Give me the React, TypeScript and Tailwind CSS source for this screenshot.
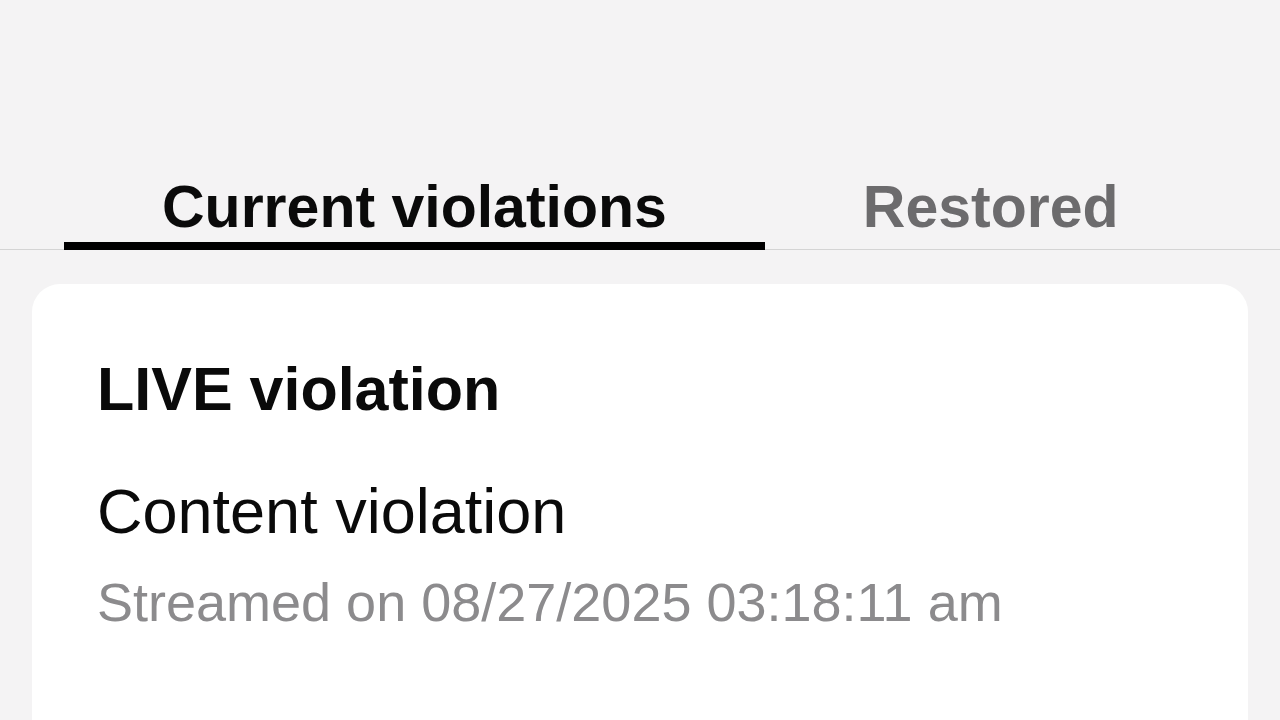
import React, { useState } from "react";

const tabs = ["Current violations", "Restored"];

export default function App() {
  const [active, setActive] = useState(0);

  return (
    <div
      className="w-full h-[720px] overflow-hidden bg-[#f4f3f4]"
      style={{ fontFamily: '"Liberation Sans", Arial, sans-serif' }}
    >
      {/* tab bar */}
      <div className="h-[250px] border-b border-[#d4d4d4] flex items-end pl-[64px]">
        {tabs.map((t, i) => (
          <button
            key={t}
            onClick={() => setActive(i)}
            className="flex flex-col items-stretch -mb-px"
          >
            <span
              className={
                "block px-[98px] text-[59px] leading-[60px] font-bold whitespace-nowrap " +
                (active === i ? "text-[#0a0a0a]" : "text-[#6c6b6d]")
              }
            >
              {t}
            </span>
            <span
              className={
                "block mt-[5px] h-[8px] " + (active === i ? "bg-black" : "bg-transparent")
              }
            />
          </button>
        ))}
      </div>

      {/* violation card */}
      <div className="mt-[34px] mx-[32px] rounded-[28px] bg-white pl-[65px] pt-[75px] pb-[200px]">
        <div className="text-[61px] leading-[61px] font-bold text-[#0a0a0a]">
          LIVE violation
        </div>
        <div className="mt-[60px] text-[63px] leading-[63px] text-[#0a0a0a]">
          Content violation
        </div>
        <div className="mt-[32px] text-[54px] leading-[54px] text-[#8c8b8d]">
          Streamed on 08/27/2025 03:18:11 am
        </div>
      </div>
    </div>
  );
}
